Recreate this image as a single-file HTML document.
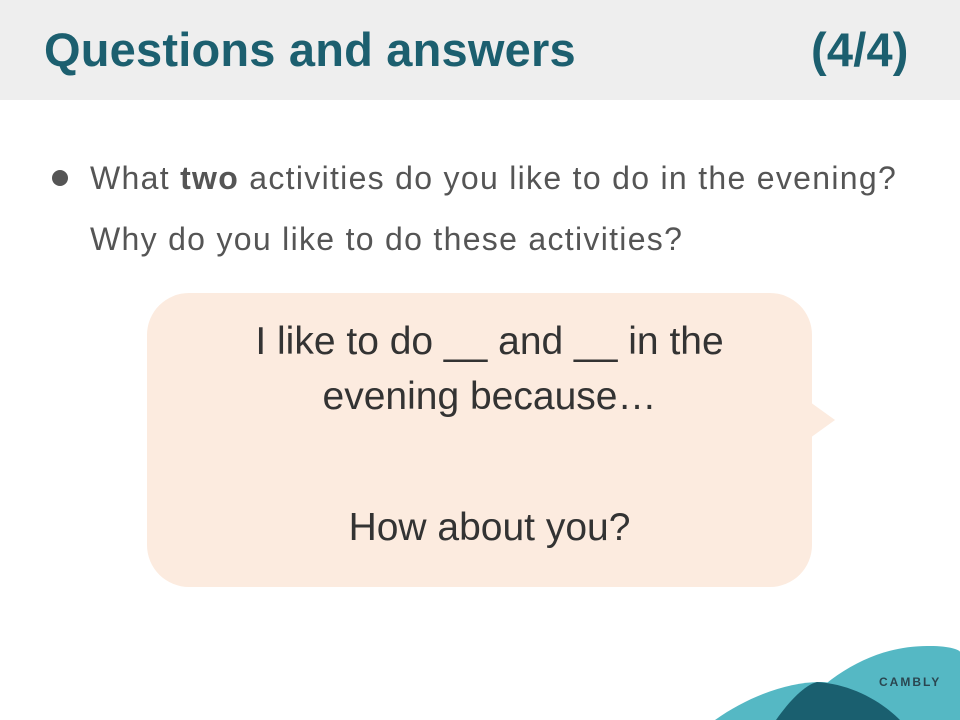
<!DOCTYPE html>
<html><head><meta charset="utf-8"><style>
body{margin:0;width:960px;height:720px;overflow:hidden;background:#fff;position:relative;font-family:"Liberation Sans",sans-serif}
.hdr{position:absolute;left:0;top:0;width:960px;height:100px;background:#eeeeee}
.t{position:absolute;top:22px;font-size:47px;font-weight:bold;color:#1c5f6f;letter-spacing:0.2px}
.q{position:absolute;left:90px;font-size:32px;color:#555;white-space:nowrap;letter-spacing:1.3px}
.dot{position:absolute;left:52px;top:170px;width:16px;height:16px;border-radius:50%;background:#555}
.bub{position:absolute;left:147px;top:293px;width:665px;height:294px;border-radius:42px;background:#fcebdf}
.tail{position:absolute;left:810px;top:402px;width:0;height:0;border-top:18px solid transparent;border-bottom:18px solid transparent;border-left:25px solid #fcebdf}
.bt{position:absolute;left:147px;width:685px;text-align:center;font-size:39px;color:#333}
</style></head><body>
<div class="hdr"></div>
<div class="t" style="left:44px">Questions and answers</div>
<div class="t" style="left:811px">(4/4)</div>
<div class="dot"></div>
<div class="q" style="top:160px">What <b>two</b> activities do you like to do in the evening?</div>
<div class="q" style="top:221px">Why do you like to do these activities?</div>
<div class="bub"></div><div class="tail"></div>
<div class="bt" style="top:320px">I like to do __ and __ in the</div>
<div class="bt" style="top:375px">evening because…</div>
<div class="bt" style="top:506px">How about you?</div>
<svg style="position:absolute;left:0;top:0" width="960" height="720">
<path d="M790 720 C830 670 880 645 930 646 C950 646 960 650 960 652 L960 720Z" fill="#55b8c4"/>
<path d="M715 720 C750 695 790 682 820 682 C850 682 880 700 900 720Z" fill="#55b8c4"/>
<path d="M776 720 C790 700 805 685 817 682 C850 684 880 700 900 720Z" fill="#1a5f6f"/>
<text x="879" y="686" font-family="Liberation Sans,sans-serif" font-size="12" font-weight="bold" fill="#2a4650" letter-spacing="2">CAMBLY</text>
</svg>
</body></html>
